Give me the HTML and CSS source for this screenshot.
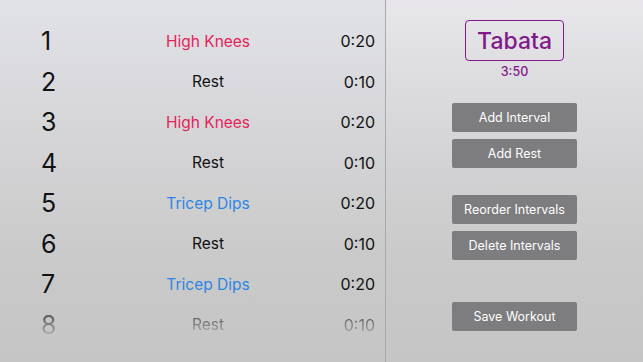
FILE: index.html
```html
<!DOCTYPE html>
<html lang="en">
<head>
    <meta charset="UTF-8">
    <meta name="viewport" content="width=device-width, initial-scale=1.0">
    <title>Tabata Workout</title>
    <link rel="stylesheet" href="styles.css">
</head>
<body>
    <div class="interval-list">
        <div class="row"><span class="num">1</span><span class="name work">High Knees</span><span class="time">0:20</span></div>
        <div class="row"><span class="num">2</span><span class="name">Rest</span><span class="time">0:10</span></div>
        <div class="row"><span class="num">3</span><span class="name work">High Knees</span><span class="time">0:20</span></div>
        <div class="row"><span class="num">4</span><span class="name">Rest</span><span class="time">0:10</span></div>
        <div class="row"><span class="num">5</span><span class="name dips">Tricep Dips</span><span class="time">0:20</span></div>
        <div class="row"><span class="num">6</span><span class="name">Rest</span><span class="time">0:10</span></div>
        <div class="row"><span class="num">7</span><span class="name dips">Tricep Dips</span><span class="time">0:20</span></div>
        <div class="row faded"><span class="num">8</span><span class="name">Rest</span><span class="time">0:10</span></div>
    </div>

    <div class="side-panel">
        <div class="workout-title">Tabata</div>
        <div class="workout-total">3:50</div>

        <div class="btn-group add">
            <button class="action-btn">Add Interval</button>
            <button class="action-btn">Add Rest</button>
        </div>
        <div class="btn-group edit">
            <button class="action-btn">Reorder Intervals</button>
            <button class="action-btn">Delete Intervals</button>
        </div>
        <div class="btn-group save">
            <button class="action-btn">Save Workout</button>
        </div>
    </div>
</body>
</html>
```

FILE: styles.css
```css
html, body {
    height: 100%;
}

body {
    margin: 0;
    display: flex;
    font-family: Inter, "Noto Sans", sans-serif;
    background: linear-gradient(to bottom, #e1e2e7 0%, #d6d6d9 35%, #cacaca 70%, #c5c5c5 100%);
    overflow: hidden;
}

.interval-list {
    width: 386px;
    padding-top: 21px;
    border-right: 1px solid #a9a9ab;
    box-sizing: border-box;
}

.row {
    display: flex;
    align-items: center;
    height: 40.5px;
    padding: 0 10px 0 41px;
    color: #111;
}

.num {
    width: 60px;
    font-size: 25px;
}

.name {
    flex: 1;
    text-align: center;
    font-size: 15.5px;
}

.name.work {
    color: #e3245a;
}

.name.dips {
    color: #2b86e4;
}

.time {
    width: 60px;
    text-align: right;
    font-size: 16px;
}

.row.faded {
    color: #555;
    -webkit-mask-image: linear-gradient(to bottom, rgba(0, 0, 0, 0.9) 30%, rgba(0, 0, 0, 0.25) 70%);
    mask-image: linear-gradient(to bottom, rgba(0, 0, 0, 0.9) 30%, rgba(0, 0, 0, 0.25) 70%);
}

.side-panel {
    flex: 1;
    display: flex;
    flex-direction: column;
    align-items: center;
    padding-top: 20px;
    background: linear-gradient(to bottom, rgba(245, 238, 240, 0.35) 0%, rgba(235, 228, 230, 0.15) 22%, rgba(255, 255, 255, 0) 45%);
}

.workout-title {
    width: 99px;
    height: 41px;
    box-sizing: border-box;
    border: 1.5px solid #82198a;
    border-radius: 4px;
    color: #82198a;
    font-size: 23px;
    font-weight: 500;
    display: flex;
    align-items: center;
    justify-content: center;
}

.workout-total {
    margin-top: 3px;
    color: #82198a;
    font-size: 12.5px;
    font-weight: 500;
}

.btn-group {
    display: flex;
    flex-direction: column;
    gap: 7px;
}

.btn-group.add {
    margin-top: 24px;
}

.btn-group.edit {
    margin-top: 27px;
}

.btn-group.save {
    margin-top: 42px;
}

.action-btn {
    width: 125px;
    height: 29px;
    border: none;
    border-radius: 2px;
    background-color: #7d7c7e;
    color: #fff;
    font-family: inherit;
    font-size: 12.5px;
    cursor: pointer;
}
```
